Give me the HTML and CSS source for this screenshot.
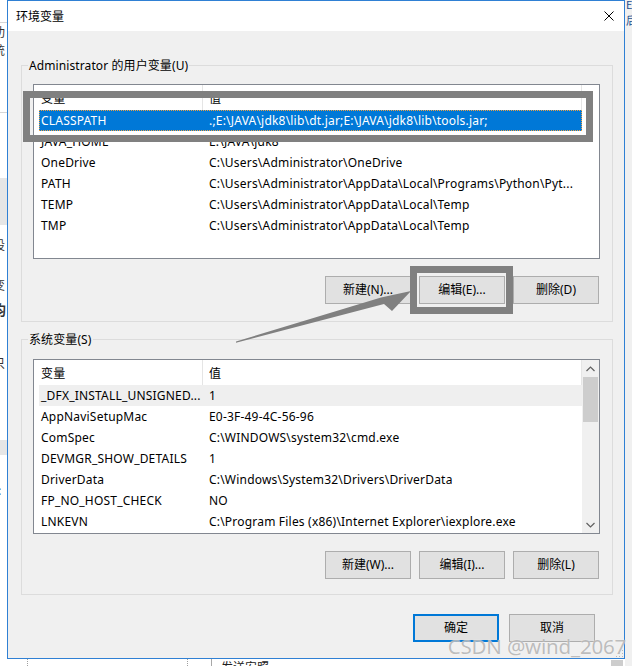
FILE: index.html
```html
<!DOCTYPE html>
<html lang="zh-CN">
<head>
<meta charset="utf-8">
<title>环境变量</title>
<link rel="stylesheet" href="styles.css">
</head>
<body>
<div class="backdrop">
  <div class="bd-hline h1"></div>
  <span class="frag fa">功</span>
  <span class="frag fb">统</span>
  <div class="bd-hline h2"></div>
  <div class="bd-box b1"></div>
  <span class="frag fc">设</span>
  <span class="frag fd">变</span>
  <span class="frag fe">均</span>
  <span class="frag ff">只</span>
  <div class="bd-box b2"></div>
  <span class="frag fg">源:</span>
  <div class="bd-right"><span class="rtext">E后</span></div>
  <div class="bd-vline v1"></div>
  <div class="bd-vline v2"></div>
  <div class="bd-vline v3"></div>
  <span class="frag fh">发送安照</span>
  <div class="bd-thumb"></div>
</div>

<div class="dialog">
  <div class="titlebar">
    <span class="title">环境变量</span>
    <svg class="close" width="10" height="10" viewBox="0 0 10 10"><path d="M0.5 0.5 L9.5 9.5 M9.5 0.5 L0.5 9.5" stroke="#000" stroke-width="1" fill="none"/></svg>
  </div>
  <div class="dlg-body">
    <div class="group g1">
      <div class="legend">Administrator 的用户变量(U)</div>
      <div class="list l1">
        <div class="table">
          <div class="head"><div class="c1">变量</div><div class="c2">值</div></div>
          <div class="row sel"><div class="c1">CLASSPATH</div><div class="c2">.;E:\JAVA\jdk8\lib\dt.jar;E:\JAVA\jdk8\lib\tools.jar;</div></div>
          <div class="row"><div class="c1">JAVA_HOME</div><div class="c2">E:\JAVA\jdk8</div></div>
          <div class="row"><div class="c1">OneDrive</div><div class="c2">C:\Users\Administrator\OneDrive</div></div>
          <div class="row"><div class="c1">PATH</div><div class="c2">C:\Users\Administrator\AppData\Local\Programs\Python\Pyt...</div></div>
          <div class="row"><div class="c1">TEMP</div><div class="c2">C:\Users\Administrator\AppData\Local\Temp</div></div>
          <div class="row"><div class="c1">TMP</div><div class="c2">C:\Users\Administrator\AppData\Local\Temp</div></div>
        </div>
        <div class="sb sb-empty"></div>
      </div>
      <div class="btns">
        <button class="btn">新建(N)...</button>
        <button class="btn">编辑(E)...</button>
        <button class="btn">删除(D)</button>
      </div>
    </div>

    <div class="group g2">
      <div class="legend">系统变量(S)</div>
      <div class="list l2">
        <div class="table">
          <div class="head"><div class="c1">变量</div><div class="c2">值</div></div>
          <div class="row hl"><div class="c1">_DFX_INSTALL_UNSIGNED...</div><div class="c2">1</div></div>
          <div class="row"><div class="c1">AppNaviSetupMac</div><div class="c2">E0-3F-49-4C-56-96</div></div>
          <div class="row"><div class="c1">ComSpec</div><div class="c2">C:\WINDOWS\system32\cmd.exe</div></div>
          <div class="row"><div class="c1">DEVMGR_SHOW_DETAILS</div><div class="c2">1</div></div>
          <div class="row"><div class="c1">DriverData</div><div class="c2">C:\Windows\System32\Drivers\DriverData</div></div>
          <div class="row"><div class="c1">FP_NO_HOST_CHECK</div><div class="c2">NO</div></div>
          <div class="row"><div class="c1">LNKEVN</div><div class="c2">C:\Program Files (x86)\Internet Explorer\iexplore.exe</div></div>
        </div>
        <div class="sb sb-bar">
          <div class="sb-arrow"><svg width="9" height="6" viewBox="0 0 9 6"><path d="M0.5 5 L4.5 1 L8.5 5" stroke="#606060" stroke-width="1.2" fill="none"/></svg></div>
          <div class="sb-thumb"></div>
          <div class="sb-track"></div>
          <div class="sb-arrow"><svg width="9" height="6" viewBox="0 0 9 6"><path d="M0.5 1 L4.5 5 L8.5 1" stroke="#606060" stroke-width="1.2" fill="none"/></svg></div>
        </div>
      </div>
      <div class="btns">
        <button class="btn">新建(W)...</button>
        <button class="btn">编辑(I)...</button>
        <button class="btn">删除(L)</button>
      </div>
    </div>

    <div class="okrow">
      <button class="btn default">确定</button>
      <button class="btn">取消</button>
    </div>
  </div>
  <div class="grip"></div>
</div>

<svg class="annot" width="632" height="666" viewBox="0 0 632 666">
  <rect x="26.5" y="94.5" width="563" height="44" fill="none" stroke="#808080" stroke-width="7"/>
  <rect x="413.5" y="269.5" width="96" height="41" fill="none" stroke="#808080" stroke-width="7"/>
  <polygon points="236,341.5 381,297.5 411,291 392,311 384,304 236,342.8" fill="#808080"/>
</svg>
<div class="watermark">CSDN @wind_2067</div>
</body>
</html>
```

FILE: styles.css
```css
* { box-sizing: border-box; }
html, body { margin: 0; padding: 0; }
body {
  width: 632px;
  height: 666px;
  overflow: hidden;
  position: relative;
  background: #fff;
  font-family: "Noto Sans", "Noto Sans CJK SC", sans-serif;
  font-size: 12px;
  color: #000;
}

/* underlying window peeking around the dialog */
.backdrop { position: absolute; inset: 0; background: #fff; overflow: hidden; }
.frag { position: absolute; font-family: "Noto Sans CJK SC", sans-serif; font-size: 12px; line-height: 14px; color: #333; white-space: nowrap; }
.fa { left: -7px; top: 25px; }
.fb { left: -7px; top: 43px; }
.fc { left: -7px; top: 238px; }
.fd { left: -7px; top: 278px; }
.fe { left: -8px; top: 302px; font-weight: bold; font-size: 14px; }
.ff { left: -7px; top: 356px; }
.fg { left: -14px; top: 483px; }
.fh { left: 221px; top: 660px; color: #222; }
.bd-hline { position: absolute; left: 0; width: 8px; height: 1px; background: #d6d6d6; }
.h1 { top: 22px; }
.h2 { top: 112px; }
.bd-box { position: absolute; left: 0; width: 8px; background: #e6e6e6; }
.b1 { top: 178px; height: 47px; }
.b2 { top: 440px; height: 15px; }
.bd-right { position: absolute; left: 625px; top: 0; width: 7px; height: 666px; background: #f0f0f0; }
.rtext { position: absolute; left: 1px; top: -4px; font-family: "Noto Sans CJK SC", sans-serif; font-size: 11px; color: #1c4f8f; }
.bd-vline { position: absolute; top: 659px; height: 7px; width: 1px; }
.v1 { left: 27px; border-left: 1px dotted #a0a0a0; }
.v2 { left: 187px; border-left: 1px dotted #a0a0a0; }
.v3 { left: 211px; background: #a8a8a8; }
.bd-thumb { position: absolute; left: 611px; top: 660px; width: 12px; height: 6px; background: #cdcdcd; }

/* dialog */
.dialog {
  position: absolute;
  left: 7px;
  top: 0;
  width: 618px;
  height: 659px;
  border: 1px solid #2f80d4;
  background: #f0f0f0;
  display: flex;
  flex-direction: column;
}
.titlebar {
  flex: none;
  height: 30px;
  background: #fff;
  display: flex;
  align-items: center;
  padding: 0 10px 0 8px;
}
.title { font-family: "Noto Sans CJK SC", sans-serif; font-size: 12px; line-height: 16px; }
.close { margin-left: auto; display: block; }

.dlg-body {
  display: flex;
  flex-direction: column;
  padding: 34px 11px 0 13px;
}
.group {
  border: 1px solid #dcdcdc;
  display: flex;
  flex-direction: column;
  padding: 0 12px 0 11px;
}
.g1 { padding-bottom: 17px; }
.g2 { margin-top: 17px; padding-bottom: 15px; }
.legend {
  align-self: flex-start;
  margin: -9px 0 0 -5px;
  padding: 0 1px;
  height: 17px;
  line-height: 17px;
  background: #f0f0f0;
  white-space: nowrap;
  letter-spacing: 0.1px;
}
.list {
  margin-top: 10px;
  height: 175px;
  border: 1px solid #828790;
  background: #fff;
  display: flex;
  overflow: hidden;
}
.g2 .list { margin-top: 11px; }
.table { flex: 1; min-width: 0; padding-left: 5px; letter-spacing: 0.2px; }
.head, .row { display: grid; grid-template-columns: 164px 1fr; }
.head { height: 25px; align-items: stretch; border-right: 1px solid #e5e5e5; }
.head .c1 { border-right: 1px solid #e5e5e5; }
.head .c1, .head .c2 { display: flex; align-items: center; }
.row { height: 21px; line-height: 21px; }
.c1 { padding-left: 2px; overflow: hidden; white-space: nowrap; }
.c2 { padding-left: 6px; overflow: hidden; white-space: nowrap; }
.row.sel { background: #0078d7; color: #fff; outline: 1px dotted #f0a040; outline-offset: -1px; }
.row.hl { background: #efefef; }

.sb { flex: none; width: 17px; }
.sb-empty { background: #fff; }
.sb-bar { background: #f0f0f0; display: flex; flex-direction: column; }
.sb-arrow { height: 17px; display: flex; align-items: center; justify-content: center; flex: none; }
.sb-thumb { height: 45px; margin: 0 1px; background: #cdcdcd; flex: none; }
.sb-track { flex: 1; }

.btns {
  display: flex;
  justify-content: flex-end;
  gap: 8px;
  margin-top: 17px;
  margin-right: 1px;
}
.btn {
  width: 86px;
  height: 28px;
  border: 1px solid #adadad;
  background: #e1e1e1;
  color: #000;
  font-family: "Noto Sans", "Noto Sans CJK SC", sans-serif;
  font-size: 12px;
  line-height: 16px;
  padding: 0;
  margin: 0;
}
.btn.default { border: 2px solid #0078d7; }
.okrow {
  display: flex;
  justify-content: flex-end;
  gap: 10px;
  margin-top: 19px;
  margin-right: 18px;
}
.grip {
  position: absolute;
  right: 1px;
  bottom: 1px;
  width: 8px;
  height: 8px;
  background-image: radial-gradient(circle, #b8b8b8 0.8px, transparent 1px);
  background-size: 3px 3px;
  clip-path: polygon(100% 0, 100% 100%, 0 100%);
}

/* annotations drawn over the screenshot */
.annot { position: absolute; left: 0; top: 0; pointer-events: none; }
.watermark {
  position: absolute;
  right: 6px;
  top: 633px;
  font-family: "Noto Sans", sans-serif;
  font-size: 20.5px;
  line-height: 26px;
  color: rgba(160, 160, 160, 0.7);
  text-shadow: 0 0 1px rgba(255, 255, 255, 0.9);
  letter-spacing: -0.2px;
  white-space: nowrap;
}
```
